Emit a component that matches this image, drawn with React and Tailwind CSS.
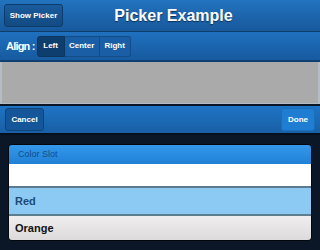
import React from 'react';

export default function App() {
  return (
    <div className="w-[320px] h-[250px] overflow-hidden bg-[#0b1727] flex flex-col" style={{ fontFamily: '"Liberation Sans", Arial, sans-serif' }}>
      {/* Header */}
      <div className="h-[32px] shrink-0 flex items-center bg-gradient-to-b from-[#2273bf] to-[#18599c] border-b border-[#0f3d6c] px-[4px]">
        <button className="h-[23px] w-[59px] rounded-[3px] bg-gradient-to-b from-[#1a5c9e] to-[#134a82] border border-[#0e3c6a] text-white text-[8px] font-bold">
          Show Picker
        </button>
        <div className="flex-1 text-center text-white text-[16px] font-bold pr-[32px] [text-shadow:0_1px_1px_#0a2f55]">
          Picker Example
        </div>
      </div>

      {/* Align bar */}
      <div className="h-[30px] shrink-0 flex items-center gap-[2px] bg-gradient-to-b from-[#1f70bf] to-[#175a9f] border-b-2 border-[#0f3f70] pl-[6px]">
        <span className="text-white text-[11px] font-bold tracking-[-0.8px] whitespace-nowrap">Align :</span>
        <div className="flex h-[21px]">
          <div className="w-[28px] justify-center flex items-center rounded-l-[3px] bg-[#0e3e6e] text-white text-[8px] font-bold border border-[#0c3560]">Left</div>
          <div className="w-[35px] justify-center flex items-center bg-[#1a5fa6] text-white text-[8px] font-bold border-y border-r border-[#134c86]">Center</div>
          <div className="w-[31px] justify-center flex items-center rounded-r-[3px] bg-[#1a5fa6] text-white text-[8px] font-bold border-y border-r border-[#134c86]">Right</div>
        </div>
      </div>

      {/* Gray area */}
      <div className="h-[42px] shrink-0 bg-[#aaaaaa] border-l-[2px] border-r-[2px] border-b border-[#b4bcc6]" />

      {/* Toolbar */}
      <div className="h-[29px] mt-[2px] shrink-0 flex items-center justify-between bg-gradient-to-b from-[#1f74c4] to-[#185fa6] border-b-2 border-[#06101c] px-[5px]">
        <button className="h-[23px] w-[39px] rounded-[3px] bg-[#15569a] border border-[#0f4478] text-white text-[8px] font-bold">Cancel</button>
        <button className="h-[23px] w-[34px] rounded-[3px] bg-[#1f7ed2] border border-[#1a6fbb] text-white text-[8px] font-bold">Done</button>
      </div>

      {/* Picker */}
      <div className="flex-1 px-[8px] pt-[9px]">
        <div className="rounded-[4px] overflow-hidden border border-[#04080e] flex flex-col">
          <div className="h-[19px] flex items-center px-[9px] bg-gradient-to-b from-[#3598ea] to-[#1f80d6] text-[#0e4e8c] text-[9px]">Color Slot</div>
          <div className="h-[24px] bg-white border-b-2 border-[#5b7a90]" />
          <div className="h-[28px] flex items-center px-[6px] bg-[#8ccaf3] border-b-2 border-[#5e7d8e] text-[#1c4a75] text-[11px] font-bold">Red</div>
          <div className="h-[24px] flex items-center px-[6px] bg-gradient-to-b from-[#f0eeee] to-[#dcdada] text-[#111] text-[11px] font-bold">Orange</div>
        </div>
      </div>
    </div>
  );
}
